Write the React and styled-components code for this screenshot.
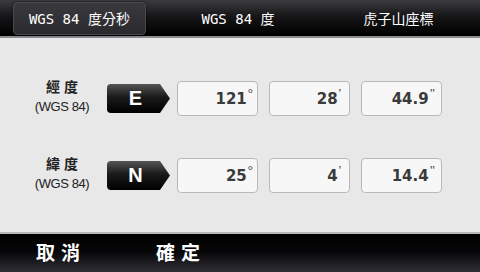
import styled, { createGlobalStyle } from "styled-components";

const GlobalStyle = createGlobalStyle`
  html, body {
    margin: 0;
    padding: 0;
    background: #000;
  }
  body {
    font-family: "Liberation Sans", "Noto Sans CJK TC", sans-serif;
  }
`;

const Screen = styled.div`
  width: 480px;
  height: 272px;
  display: flex;
  flex-direction: column;
  overflow: hidden;
  background: #e8e8e8;
`;

const TopBar = styled.div`
  height: 38px;
  display: flex;
  align-items: center;
  padding: 0 13px;
  box-sizing: border-box;
  background: linear-gradient(to bottom, #3c3c40 0%, #161618 45%, #000 100%);
  border-bottom: 2px solid #8c8c90;
`;

const Tab = styled.div`
  width: ${(props) => props.w}px;
  height: 33px;
  box-sizing: border-box;
  display: flex;
  align-items: center;
  justify-content: center;
  color: #fff;
  font-family: "DejaVu Sans Mono", "Noto Sans CJK TC", monospace;
  font-size: 14px;
  border-radius: 4px;
  ${(props) =>
    props.active &&
    `
    background: linear-gradient(to bottom, #3a3a3e, #2a2a2e);
    border: 1px solid #4a4a50;
    box-shadow: 0 0 2px #000;
  `}
`;

const Content = styled.div`
  flex: 1;
  display: flex;
  flex-direction: column;
  gap: 42px;
  padding: 43px 0 0 22px;
`;

const Row = styled.div`
  display: flex;
  align-items: center;
  height: 35px;
`;

const Label = styled.div`
  width: 80px;
  display: flex;
  flex-direction: column;
  align-items: center;
  color: #222;
  line-height: 19px;
  margin-top: -4px;
`;

const LabelMain = styled.span`
  font-size: 14px;
  font-weight: bold;
  letter-spacing: 4px;
  margin-right: -4px;
`;

const LabelSub = styled.span`
  font-size: 13px;
  letter-spacing: -0.4px;
`;

const Badge = styled.div`
  position: relative;
  width: 63px;
  height: 29px;
  margin: 0 7px 0 5px;
  display: flex;
  align-items: center;
  justify-content: center;
  padding-right: 6px;
  box-sizing: border-box;
  color: #fff;
  font-size: 20px;
  font-weight: bold;
  font-family: "Liberation Sans", sans-serif;

  svg {
    position: absolute;
    inset: 0;
    z-index: 0;
  }
  span {
    position: relative;
  }
`;

const Field = styled.div`
  width: 81px;
  height: 35px;
  box-sizing: border-box;
  margin-right: 11px;
  display: flex;
  align-items: center;
  justify-content: flex-end;
  padding-right: ${(props) => props.pr}px;
  background: #f7f7f7;
  border: 1.5px solid #b9b9b9;
  border-radius: 4px;
  color: #3a3a3a;
  font-family: "DejaVu Sans", sans-serif;
  font-weight: bold;
  font-size: 15px;
`;

const Mark = styled.sup`
  font-size: 13px;
  font-weight: normal;
  line-height: 0;
  position: relative;
  top: -6px;
  margin-left: 1px;
  font-family: "Liberation Serif", serif;
`;

const BottomBar = styled.div`
  height: 40px;
  display: flex;
  align-items: center;
  padding-left: 36px;
  gap: 70px;
  background: linear-gradient(to bottom, #000 0%, #060608 45%, #2e2e36 100%);
  border-top: 2px solid #b8b8b8;
  box-sizing: border-box;
`;

const BottomButton = styled.div`
  color: #fff;
  font-size: 19px;
  font-weight: bold;
  letter-spacing: 6px;
  margin-top: -3px;
  font-family: "Noto Sans CJK TC", sans-serif;
`;

function BadgeShape() {
  return (
    <svg width="63" height="29" viewBox="0 0 63 29">
      <defs>
        <linearGradient id="bg" x1="0" y1="0" x2="0" y2="1">
          <stop offset="0" stopColor="#555" />
          <stop offset="0.45" stopColor="#1a1a1a" />
          <stop offset="1" stopColor="#000" />
        </linearGradient>
      </defs>
      <path d="M4 0 H53 L63 14.5 L53 29 H4 Q0 29 0 25 V4 Q0 0 4 0 Z" fill="url(#bg)" />
    </svg>
  );
}

function CoordRow({ title, letter, values }) {
  return (
    <Row>
      <Label>
        <LabelMain>{title}</LabelMain>
        <LabelSub>(WGS 84)</LabelSub>
      </Label>
      <Badge>
        <BadgeShape />
        <span>{letter}</span>
      </Badge>
      <Field pr={4}>
        {values[0]}
        <Mark>°</Mark>
      </Field>
      <Field pr={8}>
        {values[1]}
        <Mark>'</Mark>
      </Field>
      <Field pr={6}>
        {values[2]}
        <Mark>"</Mark>
      </Field>
    </Row>
  );
}

export default function App() {
  return (
    <>
      <GlobalStyle />
      <Screen>
        <TopBar>
          <Tab active w={134}>WGS 84 度分秒</Tab>
          <Tab w={186}>WGS 84 度</Tab>
          <Tab w={138}>虎子山座標</Tab>
        </TopBar>
        <Content>
          <CoordRow title="經度" letter="E" values={["121", "28", "44.9"]} />
          <CoordRow title="緯度" letter="N" values={["25", "4", "14.4"]} />
        </Content>
        <BottomBar>
          <BottomButton>取消</BottomButton>
          <BottomButton>確定</BottomButton>
        </BottomBar>
      </Screen>
    </>
  );
}
